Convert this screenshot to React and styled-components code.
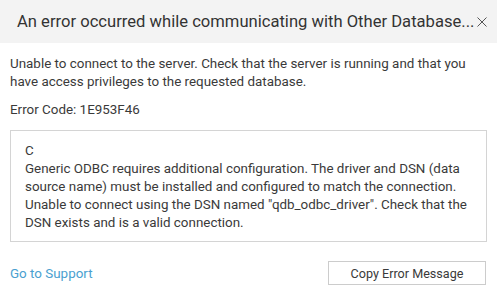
import React from 'react';
import styled, { createGlobalStyle } from 'styled-components';

const GlobalStyle = createGlobalStyle`
  html, body {
    margin: 0;
    padding: 0;
    background: #ffffff;
  }
  body {
    font-family: Roboto, 'Liberation Sans', sans-serif;
  }
`;

const Dialog = styled.div`
  width: 497px;
  height: 294px;
  background: #ffffff;
  display: flex;
  flex-direction: column;
  color: #333333;
`;

const Header = styled.div`
  height: 43px;
  background: #f3f3f3;
  display: flex;
  align-items: center;
  padding: 0 0 0 17px;
  gap: 3px;
  box-sizing: border-box;
`;

const Title = styled.div`
  font-size: 16.6px;
  color: #333333;
  white-space: nowrap;
`;

const CloseButton = styled.button`
  border: none;
  background: none;
  padding: 0;
  width: 10px;
  height: 10px;
  display: flex;
  cursor: pointer;
`;

const Body = styled.div`
  padding: 12px 10px 0 10px;
  display: flex;
  flex-direction: column;
`;

const Message = styled.p`
  margin: 0;
  font-size: 13.4px;
  line-height: 18px;
  color: #3a3a3a;
`;

const Code = styled(Message)`
  margin-top: 10px;
`;

const DetailBox = styled.div`
  margin-top: 11px;
  height: 112px;
  box-sizing: border-box;
  border: 1px solid #d4d4d4;
  padding: 11px 14px;
  font-size: 13.4px;
  line-height: 18px;
  color: #3a3a3a;
`;

const Footer = styled.div`
  display: flex;
  align-items: center;
  justify-content: space-between;
  padding: 19px 11px 0 10px;
`;

const SupportLink = styled.a`
  color: #4a9fd0;
  font-size: 13.4px;
  text-decoration: none;
  cursor: pointer;
`;

const CopyButton = styled.button`
  width: 158px;
  height: 24px;
  border: 1px solid #cccccc;
  background: #ffffff;
  color: #3a3a3a;
  font-family: inherit;
  font-size: 12.6px;
  padding: 0;
  cursor: pointer;
`;

export default function App() {
  return (
    <>
      <GlobalStyle />
      <Dialog>
        <Header>
          <Title>An error occurred while communicating with Other Database...</Title>
          <CloseButton aria-label="Close">
            <svg width="10" height="10" viewBox="0 0 10 10">
              <path d="M0.5 0.5L9.5 9.5M9.5 0.5L0.5 9.5" stroke="#555555" strokeWidth="1" />
            </svg>
          </CloseButton>
        </Header>
        <Body>
          <Message>
            Unable to connect to the server. Check that the server is running and that you
            <br />
            have access privileges to the requested database.
          </Message>
          <Code>Error Code: 1E953F46</Code>
          <DetailBox>
            C<br />
            Generic ODBC requires additional configuration. The driver and DSN (data
            <br />
            source name) must be installed and configured to match the connection.
            <br />
            Unable to connect using the DSN named "qdb_odbc_driver". Check that the
            <br />
            DSN exists and is a valid connection.
          </DetailBox>
        </Body>
        <Footer>
          <SupportLink>Go to Support</SupportLink>
          <CopyButton>Copy Error Message</CopyButton>
        </Footer>
      </Dialog>
    </>
  );
}
